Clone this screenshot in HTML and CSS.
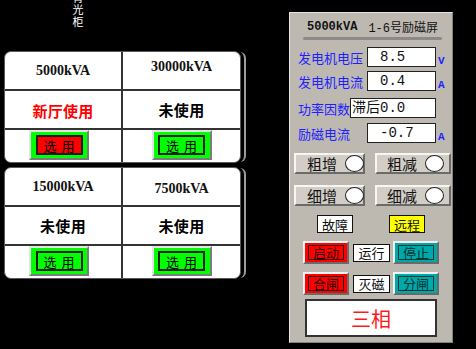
FILE: index.html
```html
<!DOCTYPE html>
<html lang="zh">
<head>
<meta charset="utf-8">
<title>励磁屏</title>
<link rel="stylesheet" href="styles.css">
</head>
<body>
<div class="page">
  <div class="left">
    <div class="caption"><span class="vtext">背光柜</span></div>
    <div class="unit-table">
      <div class="cell head">5000kVA</div>
      <div class="cell head up">30000kVA</div>
      <div class="cell state used">新厅使用</div>
      <div class="cell state">未使用</div>
      <div class="cell btncell shift"><div class="selbtn"><span class="selinner on">选用</span></div></div>
      <div class="cell btncell"><div class="selbtn"><span class="selinner">选用</span></div></div>
    </div>
    <div class="unit-table second">
      <div class="cell head">15000kVA</div>
      <div class="cell head down">7500kVA</div>
      <div class="cell state">未使用</div>
      <div class="cell state">未使用</div>
      <div class="cell btncell shift"><div class="selbtn"><span class="selinner">选用</span></div></div>
      <div class="cell btncell"><div class="selbtn"><span class="selinner">选用</span></div></div>
    </div>
  </div>

  <div class="panel">
    <div class="title"><span class="t-cap">5000kVA</span><span class="t-name">1-6号励磁屏</span></div>
    <div class="bar"></div>

    <div class="mrow r1"><span class="lbl">发电机电压</span><span class="val">8.5</span><span class="unit">V</span></div>
    <div class="mrow r2"><span class="lbl">发电机电流</span><span class="val">0.4</span><span class="unit">A</span></div>
    <div class="mrow r3"><span class="lbl">功率因数</span><span class="val wide">滞后0.0</span><span class="unit"></span></div>
    <div class="mrow r4"><span class="lbl">励磁电流</span><span class="val">-0.7</span><span class="unit">A</span></div>

    <div class="brow b1">
      <div class="cbtn w1"><span class="ctext">粗增</span><span class="lamp"></span></div>
      <div class="cbtn w2"><span class="ctext">粗减</span><span class="lamp"></span></div>
    </div>
    <div class="brow b2">
      <div class="cbtn w1"><span class="ctext">细增</span><span class="lamp"></span></div>
      <div class="cbtn w2"><span class="ctext">细减</span><span class="lamp"></span></div>
    </div>

    <div class="srow">
      <span class="tag">故障</span>
      <span class="tag yellow">远程</span>
    </div>

    <div class="crow c1">
      <div class="frame red"><span class="finner">启动</span></div>
      <span class="tag mid">运行</span>
      <div class="frame teal"><span class="finner">停止</span></div>
    </div>
    <div class="crow c2">
      <div class="frame red"><span class="finner">合闸</span></div>
      <span class="tag mid">灭磁</span>
      <div class="frame teal"><span class="finner">分闸</span></div>
    </div>

    <div class="phase">三相</div>
  </div>
</div>
</body>
</html>
```

FILE: styles.css
```css
* { box-sizing: border-box; }
html, body {
  margin: 0;
  padding: 0;
  background: #000;
  width: 476px;
  height: 349px;
  overflow: hidden;
}
body { font-family: "Noto Sans CJK SC", "Liberation Sans", sans-serif; }

.page {
  display: flex;
  align-items: flex-start;
  height: 349px;
}

/* ---------- left side ---------- */
.left {
  width: 250px;
  flex: none;
  padding-left: 4px;
}
.caption {
  height: 59px;
  padding-left: 68px;
}
.vtext {
  display: block;
  writing-mode: vertical-rl;
  color: #fff;
  font-size: 11px;
  line-height: 11px;
  letter-spacing: 1px;
  margin-top: -8px;
}

.unit-table {
  width: 237px;
  height: 112px;
  background: #fff;
  border: 1px solid #5a5a5a;
  border-radius: 7px;
  display: grid;
  grid-template-columns: 118px 1fr;
  grid-template-rows: 39px 39px 1fr;
  overflow: hidden;
  box-shadow: 3px 0 0 0 #000, 6px 0 0 -1px #9a9a9a;
}
.unit-table.second { margin-top: 4px; }

.cell {
  display: flex;
  align-items: center;
  justify-content: center;
  border-bottom: 2px solid #333;
}
.cell:nth-child(odd) { border-right: 2px solid #333; }
.cell:nth-child(5), .cell:nth-child(6) { border-bottom: none; }

.head {
  font-family: "Liberation Serif", serif;
  font-weight: bold;
  font-size: 14px;
  color: #111;
}
.head.up { padding-bottom: 7px; }
.head.down { padding-top: 5px; }

.state {
  font-size: 15px;
  font-weight: bold;
  letter-spacing: 0.3px;
  color: #000;
}
.state.used { color: #ff0000; padding-top: 2px; }

.btncell { align-items: flex-start; }
.btncell.shift { padding-right: 8px; }
.selbtn {
  width: 60px;
  height: 30px;
  background: #00ff00;
  border: 2px solid;
  border-color: #e4e4e4 #7c7c7c #7c7c7c #e4e4e4;
  display: flex;
  align-items: center;
  justify-content: center;
}
.selinner {
  width: 47px;
  height: 20px;
  border: 2px solid #1c1c1c;
  background: #00ff00;
  display: flex;
  align-items: center;
  justify-content: center;
  font-size: 13px;
  letter-spacing: 5px;
  padding-left: 5px;
  color: #000;
  white-space: nowrap;
}
.selinner.on { background: #ff0000; }

/* ---------- right panel ---------- */
.panel {
  margin-left: 39px;
  margin-top: 12px;
  width: 164px;
  height: 331px;
  flex: none;
  background: #bdb9b1;
  border: 1px solid;
  border-color: #e6e3de #85817b #85817b #e6e3de;
  display: flex;
  flex-direction: column;
}

.title {
  margin-top: 5px;
  height: 18px;
  padding-left: 17px;
  display: flex;
  align-items: center;
  font-family: "Liberation Mono", "Noto Sans CJK SC", monospace;
  font-size: 12px;
  color: #111;
}
.t-cap { font-weight: bold; }
.t-name { margin-left: 11px; }

.bar {
  margin-top: 1px;
  margin-left: 13px;
  width: 139px;
  height: 3px;
  border-radius: 2px;
  background: #8a8a8a;
}

.mrow {
  display: flex;
  align-items: center;
  height: 20px;
  padding-left: 8px;
}
.r1 { margin-top: 7px; }
.r2 { margin-top: 4px; }
.r3 { margin-top: 7px; }
.r4 { margin-top: 5px; }
.lbl {
  font-size: 13px;
  color: #1f1fff;
  white-space: nowrap;
}
.val {
  margin-left: auto;
  width: 69px;
  height: 20px;
  flex: none;
  background: #fff;
  border: 1px solid #222;
  padding-left: 12px;
  font-family: "Liberation Mono", "Noto Sans CJK SC", monospace;
  font-size: 14px;
  line-height: 18px;
  color: #111;
  white-space: nowrap;
}
.val.wide {
  width: 86px;
  padding-left: 1px;
}
.unit {
  width: 16px;
  flex: none;
  padding-left: 2px;
  font-family: "Liberation Mono", monospace;
  font-weight: bold;
  font-size: 11px;
  color: #1f1fff;
  align-self: flex-end;
}

.brow {
  display: flex;
  gap: 10px;
  padding-left: 4px;
}
.b1 { margin-top: 10px; }
.b2 { margin-top: 11px; }
.cbtn {
  height: 21px;
  flex: none;
  background: #d2cec6;
  border: 2px solid;
  border-color: #f6f6f6 #6a6a6a #6a6a6a #f6f6f6;
  display: flex;
  align-items: center;
  padding-left: 11px;
  font-size: 15px;
  color: #111;
  white-space: nowrap;
  overflow: visible;
}
.ctext { flex: none; line-height: 17px; }
.w1 { width: 71px; }
.w2 { width: 76px; padding-left: 10px; }
.lamp {
  flex: none;
  margin-left: 8px;
  width: 19px;
  height: 17px;
  border-radius: 50%;
  border: 1px solid #222;
  background: #fff;
}

.srow {
  margin-top: 9px;
  display: flex;
  padding-left: 27px;
}
.tag {
  width: 36px;
  height: 18px;
  flex: none;
  border: 1px solid #111;
  background: #fff;
  display: flex;
  align-items: center;
  justify-content: center;
  font-size: 13px;
  color: #111;
}
.tag.yellow {
  background: #ffff00;
  margin-left: 36px;
}

.crow {
  display: flex;
  align-items: center;
  padding-left: 13px;
  height: 23px;
}
.c1 { margin-top: 8px; }
.c2 { margin-top: 8px; }
.tag.mid {
  width: 37px;
  margin-left: 4px;
  margin-right: 3px;
}
.frame {
  width: 46px;
  height: 23px;
  flex: none;
  border: 2px solid;
  border-color: #f0f0f0 #6a6a6a #6a6a6a #f0f0f0;
  padding: 2px 3px;
  display: flex;
}
.frame.red { background: #ff0000; }
.frame.teal { background: #00a8a8; }
.finner {
  flex: 1;
  border: 1px solid #2a0000;
  display: flex;
  align-items: center;
  justify-content: center;
  font-size: 13px;
  color: #2a0000;
}
.teal .finner { border-color: #003a3a; color: #003030; }

.phase {
  margin-top: 4px;
  margin-left: 15px;
  width: 132px;
  height: 38px;
  background: #fff;
  border: 2px solid #333;
  display: flex;
  align-items: center;
  justify-content: center;
  font-size: 20px;
  color: #ff1a1a;
}
```
